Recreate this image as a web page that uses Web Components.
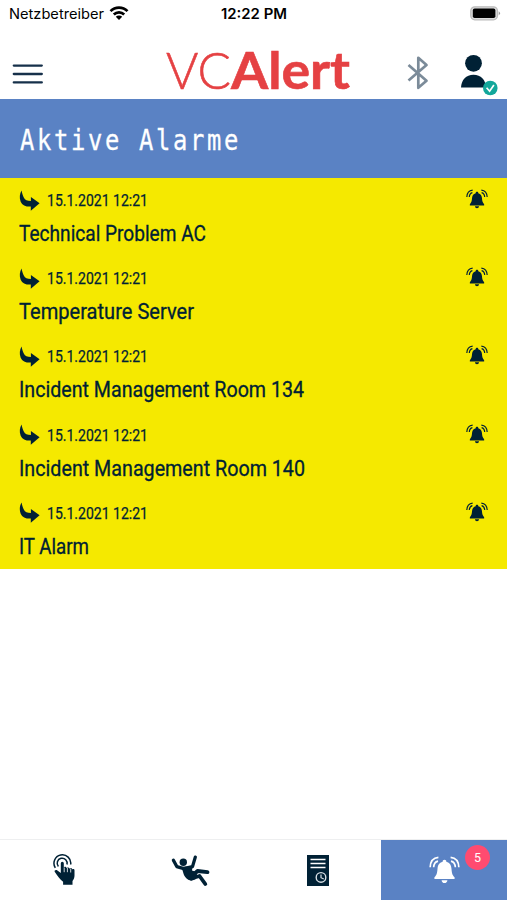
<!DOCTYPE html>
<html lang="de">
<head>
<meta charset="utf-8">
<title>VCAlert</title>
<style>
  body {
    margin: 0;
    background-color: white;
    font-family: Roboto, "Liberation Sans", sans-serif;
    color: rgb(0, 33, 53);
  }
</style>
</head>
<body>
<alert-app></alert-app>

<script>
const icons = {
  wifi: '<svg width="20" height="14" viewBox="0 0 20 14"><g fill="none" stroke="#000" stroke-width="2.7"><path d="M1.5 5.1a12 12 0 0 1 17 0"/><path d="M4.8 8.5a7.4 7.4 0 0 1 10.4 0"/></g><path d="M10 14l-3.2-3.2a4.6 4.6 0 0 1 6.4 0z"/></svg>',
  battery: '<svg width="31" height="15" viewBox="0 0 31 15"><rect x=".8" y=".8" width="26.6" height="13" rx="4" fill="#ddd" stroke="#bbb" stroke-width="1.3"/><rect x="2.8" y="2.6" width="22.6" height="9.4" rx="1.8"/><path d="M28.7 5.2q2.6 2.1 0 4.2z" fill="#999"/></svg>',
  menu: '<svg width="31" height="20" viewBox="0 0 31 20"><path d="M1.8 1.6h28M1.8 10h28M1.8 18.4h28" stroke="#16304a" stroke-width="2.3" stroke-linecap="round"/></svg>',
  bluetooth: '<svg width="22" height="36" viewBox="0 0 22 36"><path d="M1.5 10l18 15.800-8.200 7V2.800l8.200 7.200L1.500 25.500" fill="none" stroke="#7b8b99" stroke-width="2.700" stroke-linejoin="round"/></svg>',
  user: '<svg width="38" height="42" viewBox="0 0 38 42"><g fill="#002135"><circle cx="13.500" cy="9.300" r="8.400"/><path d="M1 33.500c.5-8 5-12.800 12.500-12.800S25.500 25.500 26 33.500z"/></g><circle cx="30.300" cy="34" r="7.300" fill="#13a79b"/><path d="M26.600 33.800l3 3.400 4.300-6.200" fill="none" stroke="#fff" stroke-width="1.700"/></svg>',
  arrow: '<svg width="21" height="21" viewBox="0 0 21 21"><path fill="#002135" d="M2.600.5C.7 3.500.200 7.800 1.600 11.400c1.700 4 5.400 5.400 10.200 5.200v4.100l8.800-7.500-8.700-6.200v4C8.300 10.900 6 10 4.800 7.400 3.900 5.400 3 3.500 2.600.5z"/></svg>',
  bell: '<svg viewBox="0 0 32 28"><path fill="currentColor" d="M16 3.500c1.200 0 1.900.7 1.900 2 3.700.9 5 3.700 5.300 7.200.4 4.500.7 6.300 3.200 8.800v1.800H5.600v-1.800c2.500-2.500 2.800-4.300 3.200-8.800.3-3.500 1.600-6.300 5.300-7.200 0-1.300.7-2 1.900-2zM13 24.500h6c-.2 1.900-1.300 2.900-3 2.900s-2.800-1-3-2.900z"/><g fill="none" stroke="currentColor" stroke-width="1.700"><path d="M9.700 1C4.500 1.500 1.400 5.500 1.200 11.200M9.300 4.800C6.500 5.500 5 7.700 4.800 11.200M22.300 1c5.200.5 8.300 4.500 8.500 10.200M22.700 4.800c2.800.7 4.300 2.900 4.500 6.400"/></g></svg>',
  touch: '<svg width="22" height="32" viewBox="0 0 22 32"><g fill="none" stroke="#002135" stroke-width="1.500"><path d="M2.300 13.800A8.400 8.400 0 1 1 17.700 10.500"/><path d="M5.400 12.500a5 5 0 1 1 8.600-2"/></g><path fill="#002135" d="M7.800 9.300a1.500 1.500 0 0 1 3 0v4.200c.2-1 2.500-.9 2.800.5.400-1 2.700-.7 2.900.7 0-1 2.700-.8 2.700.6h.3c1-.6 2 .1 2 1v5.200c0 2.300-.7 3.800-2 5.500v3.800h-9.400v-3C7.300 25.500 4.800 22.500 1.700 17.800c-.7-1.300 1.200-2.400 2.700-1.300l3.400 2.600z"/><path d="M11.200 13.500v4.700M14.400 14v4.200M17.700 14.500v4" stroke="#fff" stroke-width=".8"/></svg>',
  fall: '<svg width="39" height="33" viewBox="0 0 39 33"><circle cx="12.300" cy="8.300" r="3.700" fill="#002135"/><g fill="none" stroke="#002135" stroke-linecap="round" stroke-linejoin="round"><path d="M2.400 6.200l3.400 6.400 7 2 8.700-2 2.800-9.500" stroke-width="3.300"/><path d="M20.500 22.500l6-5.500 10 1.200" stroke-width="3.800"/><path d="M20 24.500l8.500-2.500 5.800 8" stroke-width="3.800"/></g><path fill="#002135" d="M10.500 13l11-1-.5 4.500 5.500 1.700-2 7-4 1.500c-4-.5-6.500-3.300-7.800-6.400z"/></svg>',
  log: '<svg width="22" height="31" viewBox="0 0 22 31"><path fill="#002135" d="M0 0h22v31H0z"/><path d="M3.500 4.500h15M3.500 8.500h15M3.500 12.500h15" stroke="#fff" stroke-width="1.400"/><circle cx="14" cy="22.400" r="4.800" fill="none" stroke="#d8e0e6" stroke-width="1.400"/><path d="M14 19.500v3.200l2.800 1.300" fill="none" stroke="#d8e0e6" stroke-width="1.200"/></svg>'
}

customElements.define('app-icon',

  /**
   * Represents an icon, picked by its name.
   */
  class extends HTMLElement {
    /**
     * Called when the element is inserted into the DOM.
     */
    connectedCallback () {
      this.attachShadow({ mode: 'open' }).innerHTML = `
        <style>
          :host { display: block; flex: none; }
          svg { display: block; }
          svg:not([width]) { width: 100%; height: 100%; }
        </style>
        ${icons[this.getAttribute('name')]}
      `
    }
  })

customElements.define('fit-text',

  /**
   * Represents a line of text, condensed or stretched to a given width.
   */
  class extends HTMLElement {
    /**
     * Called when the element is inserted into the DOM.
     */
    connectedCallback () {
      this.attachShadow({ mode: 'open' }).innerHTML = `
        <style>
          :host { display: block; flex: none; white-space: nowrap; }
          span { display: inline-block; transform-origin: 0 50%; }
        </style>
        <span><slot></slot></span>
      `
      const width = Number(this.getAttribute('width'))
      const span = this.shadowRoot.querySelector('span')
      const natural = span.getBoundingClientRect().width
      this.style.width = `${width}px`
      span.style.transform = `scaleX(${width / natural})`
    }
  })

customElements.define('status-bar',

  /**
   * Represents the status bar of the phone.
   */
  class extends HTMLElement {
    /**
     * Called when the element is inserted into the DOM.
     */
    connectedCallback () {
      this.attachShadow({ mode: 'open' }).innerHTML = `
        <style>
          :host {
            display: grid;
            grid-template-columns: 1fr auto 1fr;
            align-items: center;
            height: 28px;
            padding: 0 6px 2px 9px;
            box-sizing: border-box;
            font-family: Inter, sans-serif;
            font-size: 14px;
            color: black;
          }
          .carrier { display: flex; align-items: center; gap: 5px; }
          .time { font-size: 14.5px; font-weight: 600; margin-right: 2px; }
          .battery { justify-self: end; }
        </style>
        <div class="carrier">
          <fit-text width="95">Netzbetreiber</fit-text>
          <app-icon name="wifi"></app-icon>
        </div>
        <fit-text class="time" width="66">12:22 PM</fit-text>
        <app-icon class="battery" name="battery"></app-icon>
      `
    }
  })

customElements.define('app-header',

  /**
   * Represents the header with menu, logo and user.
   */
  class extends HTMLElement {
    /**
     * Called when the element is inserted into the DOM.
     */
    connectedCallback () {
      this.attachShadow({ mode: 'open' }).innerHTML = `
        <style>
          :host {
            display: flex;
            height: 71px;
            padding: 0 9px 0 12px;
            box-sizing: border-box;
          }
          .menu { margin-top: 36px; }
          .logo {
            display: flex;
            margin: 10px 0 0 123px;
            font-family: Lato, sans-serif;
            font-size: 52px;
            line-height: 62px;
            color: rgb(229, 65, 67);
          }
          .light { font-weight: 300; -webkit-text-stroke: 0.6px; }
          .bold { font-weight: 700; -webkit-text-stroke: 0.6px; }
          .bluetooth { margin: 27px 0 0 auto; }
          .user { margin: 26px 0 0 31px; }
        </style>
        <app-icon class="menu" name="menu"></app-icon>
        <div class="logo">
          <fit-text class="light" width="65">VC</fit-text>
          <fit-text class="bold" width="119">Alert</fit-text>
        </div>
        <app-icon class="bluetooth" name="bluetooth"></app-icon>
        <app-icon class="user" name="user"></app-icon>
      `
    }
  })

customElements.define('page-title',

  /**
   * Represents the title band.
   */
  class extends HTMLElement {
    /**
     * Called when the element is inserted into the DOM.
     */
    connectedCallback () {
      this.attachShadow({ mode: 'open' }).innerHTML = `
        <style>
          :host {
            display: flex;
            align-items: center;
            height: 79px;
            padding: 4px 20px 0;
            box-sizing: border-box;
            background-color: rgb(90, 130, 196);
            color: white;
            font-family: "DejaVu Sans Mono", monospace;
            font-size: 28.5px;
            letter-spacing: 3.2px;
            -webkit-text-stroke: 0.3px;
          }
        </style>
        <fit-text width="221"><slot></slot></fit-text>
      `
    }
  })

customElements.define('alarm-item',

  /**
   * Represents one active alarm.
   */
  class extends HTMLElement {
    /**
     * Called when the element is inserted into the DOM.
     */
    connectedCallback () {
      this.attachShadow({ mode: 'open' }).innerHTML = `
        <style>
          :host {
            display: block;
            height: 78.2px;
            padding: 8px 19px 0 19px;
            box-sizing: border-box;
          }
          .top {
            display: flex;
            align-items: center;
            height: 28px;
            font-size: 17px;
          }
          .date { margin-left: 7px; -webkit-text-stroke: 0.25px; }
          .bell { width: 22px; height: 20px; margin: -2px 0 0 auto; }
          .title {
            font-size: 21.5px;
            line-height: 39.5px;
            -webkit-text-stroke: 0.3px;
          }
        </style>
        <div class="top">
          <app-icon name="arrow"></app-icon>
          <fit-text class="date" width="101"><slot name="date"></slot></fit-text>
          <app-icon class="bell" name="bell"></app-icon>
        </div>
        <fit-text class="title" width="${this.getAttribute('width')}"><slot></slot></fit-text>
      `
    }
  })

customElements.define('tab-item',

  /**
   * Represents one tab of the tab bar.
   */
  class extends HTMLElement {
    /**
     * Called when the element is inserted into the DOM.
     */
    connectedCallback () {
      this.attachShadow({ mode: 'open' }).innerHTML = `
        <style>
          :host {
            display: flex;
            position: relative;
            align-items: center;
            justify-content: center;
          }
          :host([active]) {
            background-color: rgb(90, 130, 196);
            color: white;
          }
          .bell { width: 31px; height: 28px; }
          ::slotted(*) {
            position: absolute;
            top: 5px;
            right: 17px;
            width: 25px;
            border-radius: 50%;
            background-color: rgb(255, 75, 112);
            font-size: 12.5px;
            line-height: 25px;
            text-align: center;
          }
        </style>
        <app-icon class="${this.getAttribute('icon')}" name="${this.getAttribute('icon')}"></app-icon>
        <slot></slot>
      `
    }
  })

customElements.define('alert-app',

  /**
   * Represents the alert app.
   */
  class extends HTMLElement {
    #alarms = [
      ['Technical Problem AC', 187],
      ['Temperature Server', 175],
      ['Incident Management Room 134', 285],
      ['Incident Management Room 140', 286],
      ['IT Alarm', 70]
    ]

    /**
     * Called when the element is inserted into the DOM.
     */
    connectedCallback () {
      this.attachShadow({ mode: 'open' }).innerHTML = `
        <style>
          :host {
            display: flex;
            flex-direction: column;
            height: 900px;
            width: 507px;
            overflow: hidden;
          }
          .alarms { background-color: rgb(245, 233, 0); }
          .tabs {
            display: grid;
            grid-template-columns: repeat(3, 127px) 1fr;
            height: 60px;
            margin-top: auto;
            box-shadow: 0 -1px rgb(238, 239, 240);
          }
        </style>
        <status-bar></status-bar>
        <app-header></app-header>
        <page-title>Aktive Alarme</page-title>
        <div class="alarms">
          ${this.#alarms.map(([title, width]) => `<alarm-item width="${width}"><span slot="date">15.1.2021 12:21</span>${title}</alarm-item>`).join('')}
        </div>
        <div class="tabs">
          <tab-item icon="touch"></tab-item>
          <tab-item icon="fall"></tab-item>
          <tab-item icon="log"></tab-item>
          <tab-item icon="bell" active><span>5</span></tab-item>
        </div>
      `
    }
  })
</script>
</body>
</html>
